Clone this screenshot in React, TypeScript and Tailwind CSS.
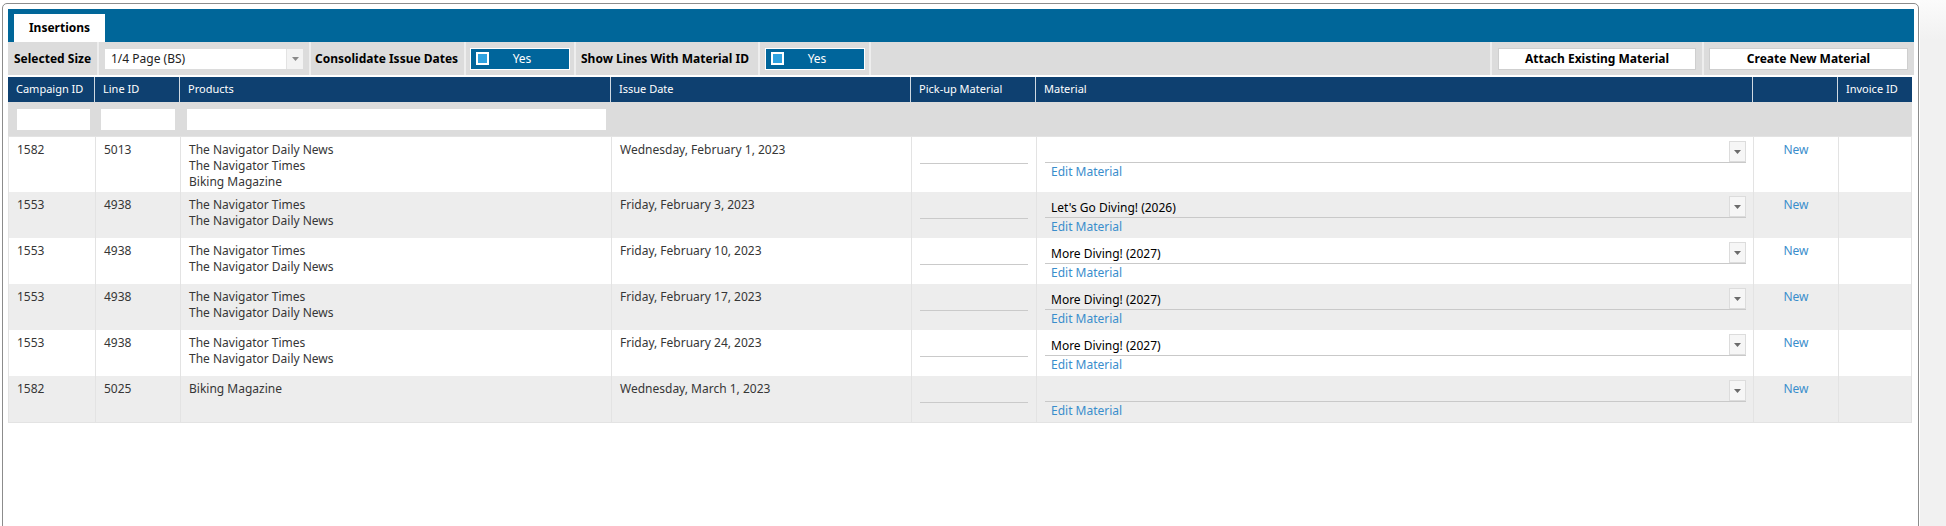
import React from 'react'

type Row = {
    campaign: string
    line: string
    products: string[]
    date: string
    material: string
    tall?: boolean
}

const rows: Row[] = [
    { campaign: '1582', line: '5013', products: ['The Navigator Daily News', 'The Navigator Times', 'Biking Magazine'], date: 'Wednesday, February 1, 2023', material: '', tall: true },
    { campaign: '1553', line: '4938', products: ['The Navigator Times', 'The Navigator Daily News'], date: 'Friday, February 3, 2023', material: "Let's Go Diving! (2026)" },
    { campaign: '1553', line: '4938', products: ['The Navigator Times', 'The Navigator Daily News'], date: 'Friday, February 10, 2023', material: 'More Diving! (2027)' },
    { campaign: '1553', line: '4938', products: ['The Navigator Times', 'The Navigator Daily News'], date: 'Friday, February 17, 2023', material: 'More Diving! (2027)' },
    { campaign: '1553', line: '4938', products: ['The Navigator Times', 'The Navigator Daily News'], date: 'Friday, February 24, 2023', material: 'More Diving! (2027)' },
    { campaign: '1582', line: '5025', products: ['Biking Magazine'], date: 'Wednesday, March 1, 2023', material: '' },
]

const grid = 'grid grid-cols-[86px_85px_431px_300px_125px_717px_85px_75px]'

const Arrow = ({ color }: { color: string }) => (
    <svg width="7" height="4" viewBox="0 0 7 4">
        <path d="M0 0 L7 0 L3.5 4 Z" fill={color} />
    </svg>
)

const Toggle = () => (
    <div className="w-[100px] h-[22px] bg-[#00659b] border border-white flex items-center">
        <div className="ml-[5px] w-[13px] h-[13px] border-2 border-white bg-[#2ea2e0]" />
        <span className="flex-1 mr-[14px] text-center text-white text-[12px] leading-[16px]">Yes</span>
    </div>
)

const Sep = () => <div className="w-[2px] self-stretch bg-[#eeeeee]" />

const Toolbar = () => (
    <div className="h-[33px] bg-[#dcdcdc] flex items-stretch text-[12px]">
        <div className="w-[89px] flex items-center pl-[6px] font-bold text-black">Selected Size</div>
        <Sep />
        <div className="w-[210px] flex items-center pl-[6px]">
            <div className="w-[198px] h-[20px] bg-white flex">
                <div className="flex-1 pl-[6px] pt-[2px] leading-[16px] text-[#222]">1/4 Page (BS)</div>
                <div className="w-[17px] bg-[#f3f3f3] border-l border-[#e3e3e3] flex items-center justify-center">
                    <Arrow color="#8a8a8a" />
                </div>
            </div>
        </div>
        <Sep />
        <div className="w-[153px] flex items-center pl-[4px] font-bold text-black">Consolidate Issue Dates</div>
        <Sep />
        <div className="w-[108px] flex items-center pl-[4px]">
            <Toggle />
        </div>
        <Sep />
        <div className="w-[182px] flex items-center pl-[5px] font-bold text-black">Show Lines With Material ID</div>
        <Sep />
        <div className="w-[109px] flex items-center pl-[5px]">
            <Toggle />
        </div>
        <Sep />
        <div className="flex-1" />
        <Sep />
        <div className="w-[210px] flex items-center pl-[6px]">
            <button className="w-[198px] h-[22px] bg-white border border-[#cfcfcf] font-bold text-black flex items-center justify-center">
                Attach Existing Material
            </button>
        </div>
        <Sep />
        <div className="w-[210px] flex items-center pl-[5px]">
            <button className="w-[199px] h-[22px] bg-white border border-[#cfcfcf] font-bold text-black flex items-center justify-center">
                Create New Material
            </button>
        </div>
    </div>
)

const headers = ['Campaign ID', 'Line ID', 'Products', 'Issue Date', 'Pick-up Material', 'Material', '', 'Invoice ID']

const MaterialSelect = ({ value }: { value: string }) => (
    <div className="h-[22px] flex border-b border-[#c9c9c9]">
        <div className="flex-1 pl-[6px] pt-[4px] leading-[16px] text-black">{value}</div>
        <div className="w-[17px] border border-[#dcdcdc] bg-[#f6f6f6] flex items-center justify-center">
            <Arrow color="#6b6b6b" />
        </div>
    </div>
)

const App = () => {
    return (
        <div className="w-[1946px] h-[526px] overflow-hidden bg-white flex" style={{ fontFamily: '"Noto Sans", "Open Sans", sans-serif' }}>
            <div className="ml-[2px] mt-[3px] w-[1917px] h-[560px] border border-[#8c8c8c] rounded-[5px] bg-white pt-[5px] pl-[5px] pr-[4px]">
                <div className="h-[33px] bg-[#006699] pt-[5px] pl-[6px]">
                    <div className="w-[91px] h-[28px] bg-white flex items-center justify-center text-[12px] font-bold text-black">
                        Insertions
                    </div>
                </div>
                <Toolbar />
                <div className="mt-[2px] w-[1904px]">
                    <div className={`${grid} h-[25px] bg-[#0e4070] text-white text-[11px]`}>
                        {headers.map((h, i) => (
                            <div key={i} className={`flex items-center px-2 ${i > 0 ? 'border-l border-white/80' : ''}`}>
                                {h}
                            </div>
                        ))}
                    </div>
                    <div className={`${grid} h-[34px] bg-[#dcdcdc] items-center`}>
                        <div className="pl-[9px] pr-[4px]"><div className="h-[21px] bg-white" /></div>
                        <div className="pl-[7px] pr-[4px]"><div className="h-[21px] bg-white" /></div>
                        <div className="pl-[8px] pr-[4px]"><div className="h-[21px] bg-white" /></div>
                    </div>
                    <div className="border-t border-x border-b border-[#e3e3e3] text-[12px] leading-[16px] text-[#363636]">
                        {rows.map((r, i) => (
                            <div
                                key={i}
                                className={`${grid} ${r.tall ? 'h-[55px]' : 'h-[46px]'} ${i % 2 === 0 ? 'bg-white' : 'bg-[#ededed]'}`}
                            >
                                <div className="pt-[5px] px-2">{r.campaign}</div>
                                <div className="pt-[5px] px-2 border-l border-[#e3e3e3]">{r.line}</div>
                                <div className="pt-[5px] px-2 border-l border-[#e3e3e3]">
                                    {r.products.map((p) => (
                                        <div key={p}>{p}</div>
                                    ))}
                                </div>
                                <div className="pt-[5px] px-2 border-l border-[#e3e3e3]">{r.date}</div>
                                <div className="pt-[4px] px-2 border-l border-[#e3e3e3]">
                                    <div className="h-[23px] border-b border-[#cacaca]" />
                                </div>
                                <div className="pt-[4px] pl-2 pr-[7px] border-l border-[#e3e3e3]">
                                    <MaterialSelect value={r.material} />
                                    <div className="pl-[6px] pt-[1px] text-[#3a8dcc]">Edit Material</div>
                                </div>
                                <div className="pt-[5px] text-center text-[#3a8dcc] border-l border-[#e3e3e3]">New</div>
                                <div className="border-l border-[#e3e3e3]" />
                            </div>
                        ))}
                    </div>
                </div>
            </div>
            <div className="ml-[1px] flex-1 bg-[linear-gradient(to_bottom,#fbfbfb,#f1f1f1_40px)]" />
        </div>
    )
}

export default App
